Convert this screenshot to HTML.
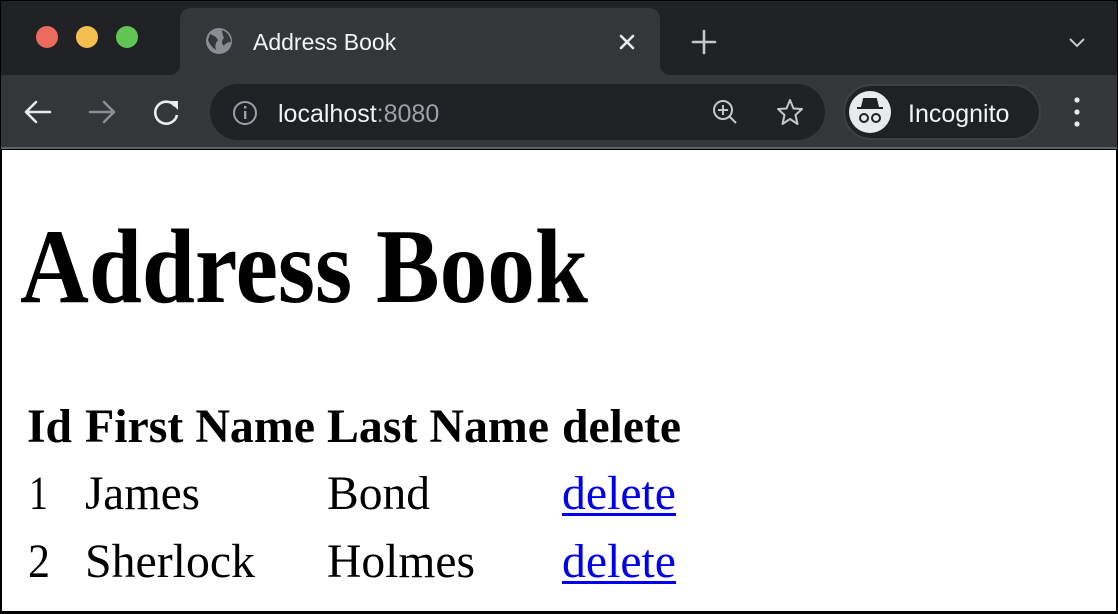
<!DOCTYPE html>
<html><head><meta charset="utf-8"><style>
html,body{margin:0;padding:0;width:1118px;height:614px;overflow:hidden;background:#000}
svg{display:block}
</style></head><body>
<svg width="1118" height="614" viewBox="0 0 1118 614" xmlns="http://www.w3.org/2000/svg">
<rect x="0" y="0" width="1118" height="614" fill="#000"/>
<rect x="1" y="1" width="1116" height="74" fill="#202124"/>
<path d="M168 75 Q180 75 180 64 L180 20 Q180 8 192 8 L648 8 Q660 8 660 20 L660 64 Q660 75 672 75 Z" fill="#35363a"/>
<circle cx="47" cy="37" r="11" fill="#ed6a5e"/>
<circle cx="87" cy="37" r="11" fill="#f5bf4f"/>
<circle cx="127" cy="37" r="11" fill="#61c554"/>
<circle cx="219" cy="41" r="13" fill="#8a8d93"/>
<path d="M210 34 Q216 36 218 40 Q214 44 216 50 Q210 46 208 40 Z M222 30 Q230 33 231 42 Q226 42 224 46 Q220 42 224 38 Q222 34 222 30 Z" fill="#35363a"/>
<text x="253" y="50" font-family="Liberation Sans, sans-serif" font-size="23" fill="#f1f3f4">Address Book</text>
<path d="M621 36 L633 48 M633 36 L621 48" stroke="#e8eaed" stroke-width="2.6" stroke-linecap="round"/>
<path d="M704 31 V53 M693 42 H715" stroke="#c4c7c5" stroke-width="2.6" stroke-linecap="round"/>
<path d="M1070 39 L1077 46 L1084 39" stroke="#c4c7c5" stroke-width="2" fill="none"/>
<rect x="1" y="75" width="1116" height="73" fill="#35363a"/>
<rect x="1" y="147" width="1116" height="2" fill="#5f6368"/>
<path d="M26 112 H50 M36 102 L26 112 L36 122" stroke="#e8eaed" stroke-width="2.6" fill="none" stroke-linecap="round" stroke-linejoin="round"/>
<path d="M90 112 H114 M104 102 L114 112 L104 122" stroke="#8a8d93" stroke-width="2.6" fill="none" stroke-linecap="round" stroke-linejoin="round"/>
<path d="M175 106 A11 11 0 1 0 177 115" stroke="#e8eaed" stroke-width="2.6" fill="none"/>
<path d="M169 101 L178 101 L178 110 Z" fill="#e8eaed"/>
<rect x="210" y="84" width="615" height="56" rx="28" fill="#202124"/>
<circle cx="245" cy="113" r="11" stroke="#9aa0a6" stroke-width="2" fill="none"/>
<rect x="244" y="111" width="2.4" height="8" fill="#9aa0a6"/><rect x="244" y="106" width="2.4" height="2.5" fill="#9aa0a6"/>
<text x="278" y="122" font-family="Liberation Sans, sans-serif" font-size="25" fill="#f1f3f4">localhost<tspan fill="#9aa0a6">:8080</tspan></text>
<circle cx="723" cy="110" r="9" stroke="#c4c7c5" stroke-width="2" fill="none"/>
<path d="M729 116 L736 123 M723 105 V115 M718 110 H728" stroke="#c4c7c5" stroke-width="2"/>
<path d="M790 100 L793.5 108.5 L802 109 L795.5 115 L797.5 124 L790 119 L782.5 124 L784.5 115 L778 109 L786.5 108.5 Z" stroke="#c4c7c5" stroke-width="2" fill="none" stroke-linejoin="round"/>
<rect x="844" y="85" width="196" height="54" rx="27" fill="#202124" stroke="#3c4043" stroke-width="2"/>
<circle cx="870" cy="112" r="21" fill="#e8eaed"/>
<path d="M862 107 L864 99 H876 L878 107 Z M857 108 H883" stroke="#202124" stroke-width="2" fill="#202124"/>
<circle cx="864" cy="118" r="4" stroke="#202124" stroke-width="2" fill="none"/>
<circle cx="876" cy="118" r="4" stroke="#202124" stroke-width="2" fill="none"/>
<text x="908" y="122" font-family="Liberation Sans, sans-serif" font-size="25" fill="#f1f3f4">Incognito</text>
<circle cx="1077" cy="100" r="2.6" fill="#e8eaed"/><circle cx="1077" cy="112" r="2.6" fill="#e8eaed"/><circle cx="1077" cy="124" r="2.6" fill="#e8eaed"/>
<rect x="2" y="150" width="1114" height="461" fill="#fff"/>
<g font-family="Liberation Serif, serif" fill="#000">
<text x="20" y="302" font-size="106" font-weight="bold" textLength="568" lengthAdjust="spacingAndGlyphs">Address Book</text>
<g font-size="48" font-weight="bold">
<text x="27" y="442" textLength="45" lengthAdjust="spacingAndGlyphs">Id</text>
<text x="85" y="442" textLength="230" lengthAdjust="spacingAndGlyphs">First Name</text>
<text x="327" y="442" textLength="222" lengthAdjust="spacingAndGlyphs">Last Name</text>
<text x="562" y="442" textLength="119" lengthAdjust="spacingAndGlyphs">delete</text>
</g>
<g font-size="48">
<text x="29" y="509" textLength="19" lengthAdjust="spacingAndGlyphs">1</text>
<text x="85" y="509" textLength="115" lengthAdjust="spacingAndGlyphs">James</text>
<text x="327" y="509" textLength="103" lengthAdjust="spacingAndGlyphs">Bond</text>
<text x="562" y="509" textLength="114" lengthAdjust="spacingAndGlyphs" fill="#0000ee">delete</text>
<rect x="562" y="513" width="114" height="3" fill="#0000ee"/>
<text x="28" y="577" textLength="22" lengthAdjust="spacingAndGlyphs">2</text>
<text x="85" y="577" textLength="170" lengthAdjust="spacingAndGlyphs">Sherlock</text>
<text x="327" y="577" textLength="148" lengthAdjust="spacingAndGlyphs">Holmes</text>
<text x="562" y="577" textLength="114" lengthAdjust="spacingAndGlyphs" fill="#0000ee">delete</text>
<rect x="562" y="581" width="114" height="3" fill="#0000ee"/>
</g>
</g>
</svg>
</body></html>
